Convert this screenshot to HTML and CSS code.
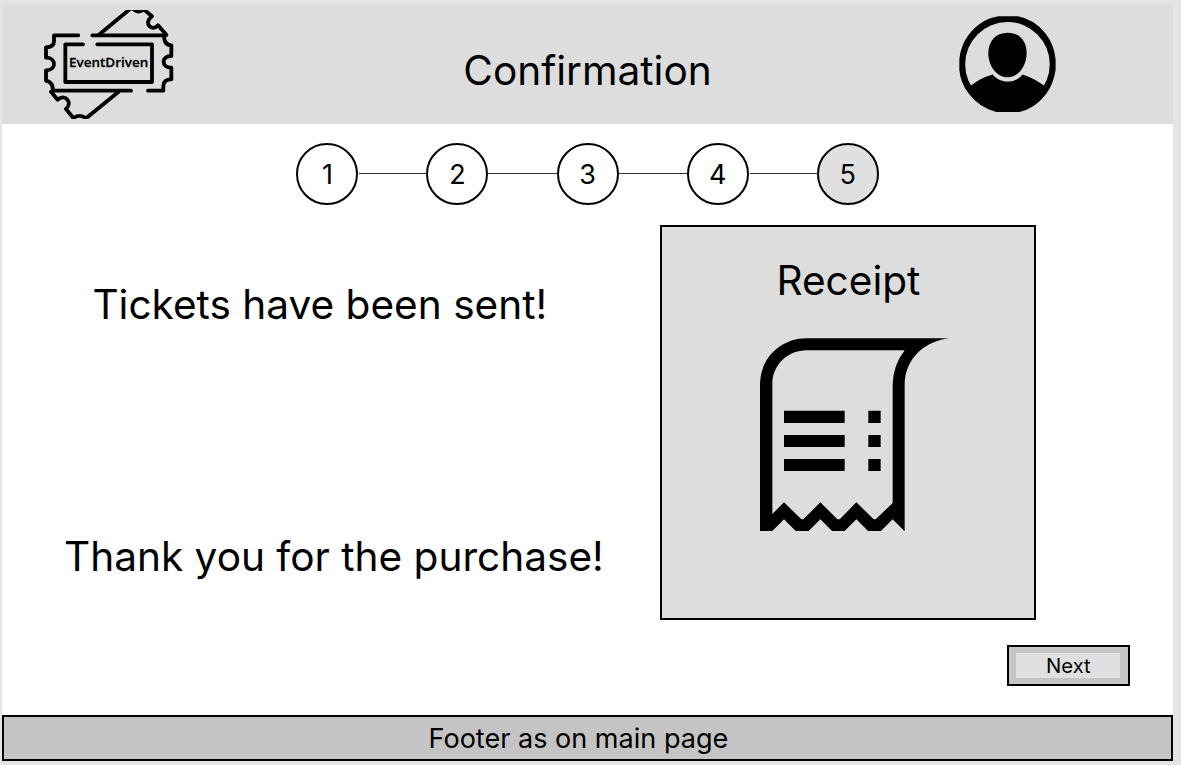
FILE: index.html
```html
<!DOCTYPE html>
<html lang="en">
<head>
<meta charset="utf-8">
<title>Confirmation</title>
<link rel="stylesheet" href="styles.css">
</head>
<body>
<div class="page">
  <header class="header">
    <svg class="logo" viewBox="0 0 480 390" fill="none" stroke="#000" stroke-width="11.500" stroke-linecap="round" stroke-linejoin="round">
      <defs><clipPath id="logo-clip"><rect x="30" y="30" width="420" height="327"/></clipPath></defs>
      <g clip-path="url(#logo-clip)">
        <path d="M145 106H72V124Q72 142 48 142V173C80 173 80 211 48 211V242Q69 246 69 272H303"/>
        <path d="M187 106H408M354 272H400V258Q400 238 424 238V203C393 203 393 168 424 168V136Q402 136 402 106"/>
        <path d="M159 133H106V246H366V133H202"/>
        <path d="M207 104L306 22M309 27Q326 41 341 28L366 49C338 70 366 97 384 76L409 104"/>
        <path d="M63 275L83 299C105 280 129 307 108 327L130 354Q150 341 168 355L264 277"/>
      </g>
      <text class="logo-text" x="117" y="201" textLength="238" lengthAdjust="spacingAndGlyphs">EventDriven</text>
    </svg>
    <h1 class="title"><span>Confirmation</span></h1>
    <svg class="avatar" viewBox="58 47 290 290">
      <defs><clipPath id="avatar-clip"><circle cx="203.500" cy="192" r="137"/></clipPath></defs>
      <path d="M59 177Q63 136 86 105Q122 57 176 48H235Q285 57 319 101Q344 134 348 177V209Q342 250 319 282Q285 326 236 336H173Q121 325 87 280Q62 247 59 209Z"/>
      <ellipse class="avatar-space" cx="203.500" cy="192" rx="127" ry="127"/>
      <path clip-path="url(#avatar-clip)" d="M80 268Q115 235 159 223C181 251 226 251 249 223Q291 236 327 268V340H80Z"/>
      <path d="M204 97C240 97 261 123 261 158C261 196 237 231 204 231C170 231 146 196 146 158C146 123 168 97 204 97Z"/>
    </svg>
  </header>
  <ol class="steps">
    <li class="step">1</li>
    <li class="line line-first"></li>
    <li class="step">2</li>
    <li class="line"></li>
    <li class="step">3</li>
    <li class="line"></li>
    <li class="step">4</li>
    <li class="line line-last"></li>
    <li class="step step-current">5</li>
  </ol>
  <main class="content">
    <div class="messages">
      <p class="sent"><span>Tickets have been sent!</span></p>
      <p class="thanks"><span>Thank you for the purchase!</span></p>
    </div>
    <section class="receipt">
      <h2 class="receipt-title"><span>Receipt</span></h2>
      <svg class="receipt-icon" viewBox="60 54 570 580">
        <path fill-rule="evenodd" d="M60 634V190C62 112 124 55 200 55H630C555 62 496 115 494 192V634L458 598L422 634H385L349 598L313 634H277L241 598L205 634H168L132 598L96 634ZM97 582L132 547L184 598H190L241 547L292 598H299L349 547L401 598H407L458 549V192Q460 135 494 91H200C143 91 97 135 97 192Z"/>
        <path d="M132 272H314V309H132ZM132 345H314V381H132ZM132 417H314V453H132ZM385 272H422V309H385ZM385 345H422V381H385ZM385 417H422V453H385Z"/>
      </svg>
    </section>
  </main>
  <div class="actions">
    <button class="next"><span class="next-label">Next</span></button>
  </div>
  <footer class="footer"><span>Footer as on main page</span></footer>
</div>
</body>
</html>
```
FILE: styles.css
```css
* { box-sizing: border-box; }

body {
  margin: 0;
  background: #e4e4e4;
  color: #000;
  font-family: Inter, sans-serif;
}

h1, h2, p, ol { margin: 0; padding: 0; font-weight: 400; }

.page {
  width: 1171px;
  height: 757px;
  margin: 4px 0 0 2.4px;
  background: #fff;
  display: flex;
  flex-direction: column;
}

.header {
  height: 120px;
  flex: none;
  background: #ddd;
  display: flex;
}

.logo {
  width: 160px;
  height: 130px;
  margin: -4px 0 0 27.6px;
  flex: none;
}

.logo-text {
  font: 600 40px "Open Sans", sans-serif;
  fill: #000;
  stroke: #000;
  stroke-width: 0.8px;
}

.title {
  width: 440px;
  margin: 41.500px 0 0 177.500px;
  font-size: 40.600px;
  line-height: 50px;
  text-align: center;
}

.avatar {
  width: 96.600px;
  height: 96.600px;
  margin: 11.700px 0 0 151.800px;
}

.avatar-space { fill: #ddd; }

.steps {
  height: 62px;
  flex: none;
  margin: 19px 0 0 294px;
  display: flex;
  list-style: none;
}

.step {
  width: 62px;
  height: 62px;
  border: 2px solid #000;
  border-radius: 50%;
  font-size: 27px;
  line-height: 59px;
  text-align: center;
}

.step-current { background: #e0e0e0; }

.line {
  width: 68.100px;
  height: 1px;
  margin-top: 30px;
  background: #333;
}

.line-first, .line-last { width: 67.100px; margin-left: 1px; }

.content {
  height: 395px;
  flex: none;
  margin-top: 20px;
  display: flex;
}

.messages {
  width: 658px;
  font-size: 40.600px;
  line-height: 50px;
}

.sent { margin: 54.500px 0 0 90px; }
.thanks { margin: 202px 0 0 61.600px; }

.receipt {
  width: 376px;
  height: 395px;
  border: 2px solid #000;
  background: #ddd;
  display: flex;
  flex-direction: column;
  align-items: center;
}

.receipt-title {
  margin-top: 29px;
  font-size: 40.600px;
  line-height: 50px;
}

.receipt-icon {
  width: 190px;
  height: 193.300px;
  margin: 32px 0 0 12.500px;
}

.actions {
  display: flex;
  justify-content: flex-end;
  padding: 25px 43px 0 0;
}

.next {
  width: 123px;
  height: 41px;
  padding: 6px 8px 6px 7px;
  border: 2px solid #000;
  background: #c4c4c4;
  color: #000;
  font: 20.300px/25px Inter, sans-serif;
}

.next-label {
  display: block;
  height: 25px;
  background: #e0e0e0;
}

.footer {
  height: 46px;
  margin-top: auto;
  padding-right: 19px;
  border: 2px solid #000;
  background: #c4c4c4;
  font-size: 27.050px;
  line-height: 44px;
  text-align: center;
}
```
